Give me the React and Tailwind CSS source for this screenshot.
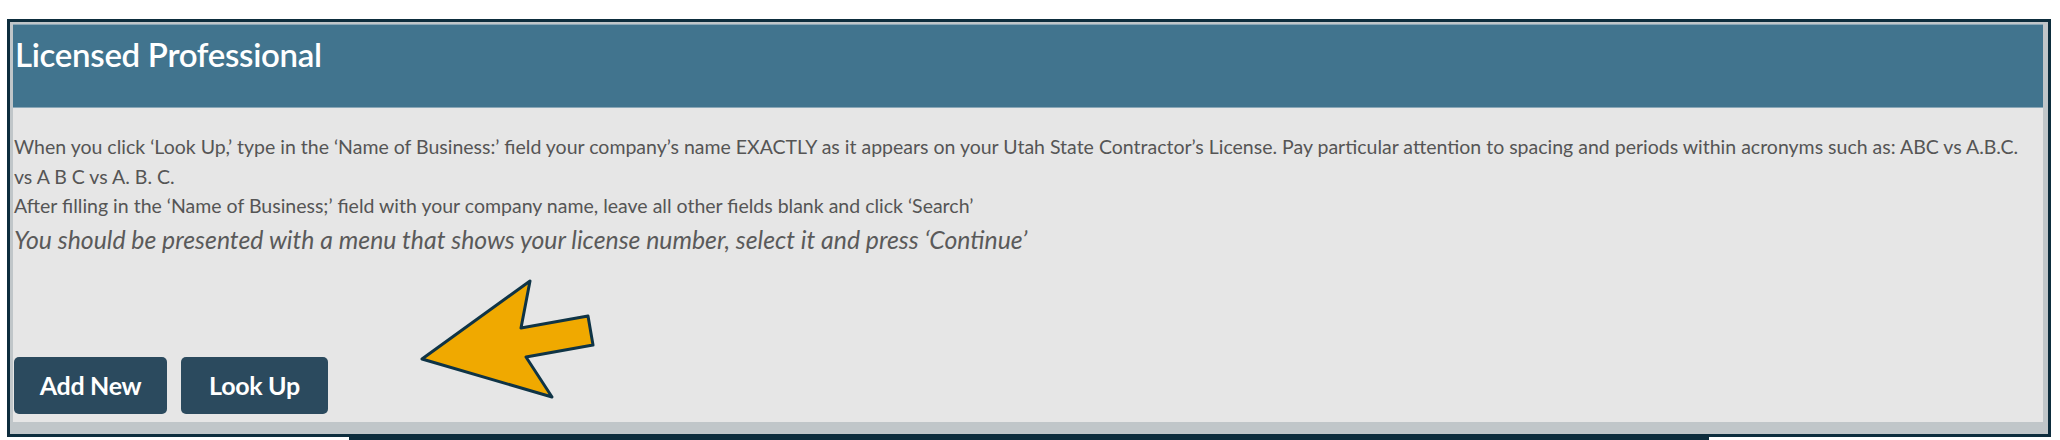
import React from "react";

export default function App() {
  return (
    <div
      className="relative w-[2060px] h-[440px] overflow-hidden bg-white"
      style={{ fontFamily: "Lato, 'Noto Sans', sans-serif" }}
    >
      <div className="ml-[7px] mt-[19px] w-[2044px] border-[3px] border-[#0d2d3d] bg-[#c0c6c9] pt-[2px] pl-[3px] pr-[5px] pb-[12px]">
        <div className="h-[84px] bg-[#41748e] border-t border-b border-[#8aa7b7] pl-[2px] pt-[11px]">
          <h2 className="text-[33px] leading-[36px] font-semibold text-white tracking-[-0.3px]">
            Licensed Professional
          </h2>
        </div>
        <div className="h-[314px] bg-[#e6e6e6] flex flex-col pl-[1px] pt-[24px] pb-[8px]">
          <div className="pr-[22px] text-[19.5px] leading-[29.5px] text-[#555555]">
            <p>
              When you click ‘Look Up,’ type in the ‘Name of Business:’ field your company’s name EXACTLY as it appears on your Utah State Contractor’s License. Pay particular attention to spacing and periods within acronyms such as: ABC vs A.B.C. vs A B C vs A. B. C.
            </p>
            <p>
              After filling in the ‘Name of Business;’ field with your company name, leave all other fields blank and click ‘Search’
            </p>
          </div>
          <p className="mt-[4px] text-[24.8px] leading-[30px] italic text-[#5a5a5a]">
            You should be presented with a menu that shows your license number, select it and press ‘Continue’
          </p>
          <div className="mt-auto flex gap-[14px]">
            <button className="w-[153px] h-[57px] rounded-[5px] bg-[#2b4a5e] text-white text-[25px] font-bold tracking-[-0.3px]">
              Add New
            </button>
            <button className="w-[147px] h-[57px] rounded-[5px] bg-[#2b4a5e] text-white text-[25px] font-bold tracking-[-0.3px]">
              Look Up
            </button>
          </div>
        </div>
      </div>
      <div className="ml-[349px] w-[1360px] h-[3px] bg-[#0d2d3d]" />
      <svg
        className="absolute left-[410px] top-[270px]"
        width="200"
        height="140"
        viewBox="0 0 200 140"
      >
        <polygon
          points="12,89 120,11 111,58 178,46 183,75 116,87 142,127"
          fill="#f0a900"
          stroke="#0f3446"
          strokeWidth="3"
          strokeLinejoin="round"
        />
      </svg>
    </div>
  );
}
